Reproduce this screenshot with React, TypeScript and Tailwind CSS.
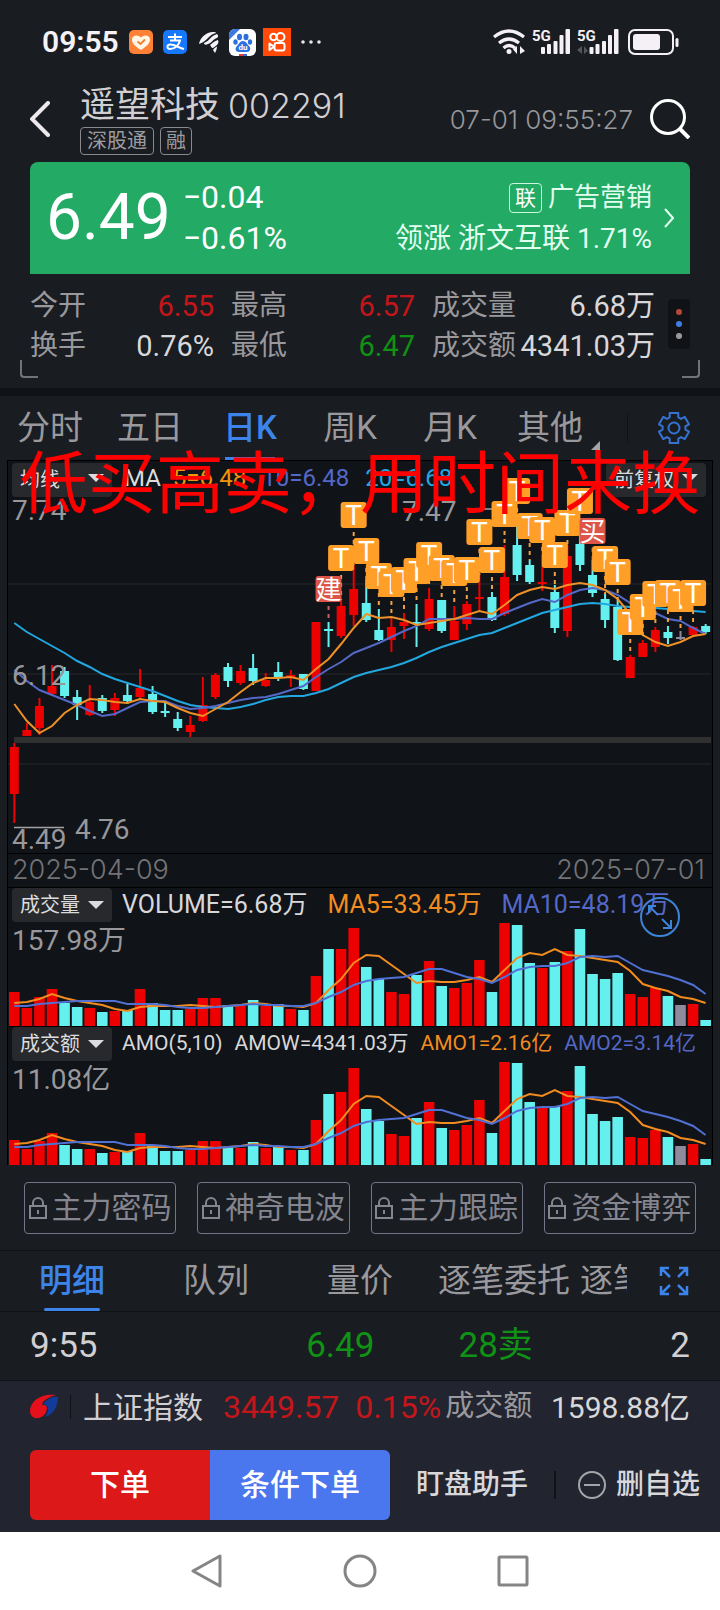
import type { ReactNode } from 'react';

const RED = '#ec0000';
const CYAN = '#65f0f0';
const GRAY = '#8f8a9c';

// x position of the n-th trading day
const dayX = (i: number) => 14.3 + i * 12.57;

// [colour, body top, body bottom, high, low]
const candles: [string, number, number, number, number][] = [
  [RED, 747, 794, 743, 823], [RED, 730, 736, 723, 736], [RED, 706, 728, 698, 735], [RED, 686, 694, 665, 694],
  [CYAN, 671, 696, 667, 698], [CYAN, 697, 705, 690, 720], [RED, 702, 715, 685, 716], [CYAN, 698, 711, 695, 713],
  [RED, 698, 710, 693, 716], [CYAN, 695, 701, 684, 704], [RED, 688, 697, 669, 699], [CYAN, 694, 712, 686, 714],
  [CYAN, 711, 713, 701, 717], [CYAN, 719, 728, 712, 731], [RED, 725, 732, 716, 737], [RED, 705, 721, 677, 722],
  [RED, 675, 697, 673, 699], [CYAN, 667, 681, 663, 687], [RED, 671, 683, 665, 685], [CYAN, 668, 681, 654, 685],
  [RED, 680, 686, 673, 687], [CYAN, 672, 678, 662, 681], [RED, 675, 677, 670, 687], [CYAN, 674, 689, 674, 690],
  [RED, 622, 691, 622, 691], [CYAN, 629, 631, 622, 647], [RED, 606, 636, 600, 638], [RED, 589, 615, 565, 626],
  [CYAN, 603, 620, 580, 622], [CYAN, 630, 640, 609, 641], [RED, 627, 640, 618, 652], [RED, 622, 626, 613, 639],
  [CYAN, 622, 624, 604, 647], [RED, 599, 629, 588, 631], [CYAN, 600, 631, 600, 633], [RED, 621, 640, 606, 640],
  [RED, 604, 624, 601, 630], [RED, 597, 599, 575, 611], [CYAN, 597, 620, 592, 621], [RED, 577, 614, 545, 616],
  [CYAN, 545, 575, 525, 581], [CYAN, 565, 582, 560, 584], [RED, 582, 584, 555, 591], [CYAN, 592, 628, 585, 633],
  [RED, 556, 631, 545, 637], [CYAN, 544, 565, 525, 571], [CYAN, 575, 593, 560, 597], [CYAN, 599, 620, 594, 628],
  [CYAN, 607, 660, 600, 661], [RED, 657, 678, 655, 678], [RED, 643, 657, 640, 657], [RED, 630, 647, 627, 652],
  [CYAN, 632, 638, 626, 644], [GRAY, 637, 639, 631, 640], [RED, 627, 635, 626, 636], [CYAN, 626, 632, 624, 634],
];

const ma5 = [704, 721, 733, 726, 713, 705, 699, 700, 702, 703, 699, 701, 702, 708, 713, 716, 709, 702, 692, 683, 678, 678, 677, 680, 669, 659, 644, 628, 614, 618, 617, 620, 625, 623, 621, 619, 615, 611, 614, 605, 595, 590, 587, 589, 585, 583, 585, 590, 599, 614, 635, 642, 646, 642, 636, 634];
const ma10 = [670, 681, 690, 695, 700, 705, 711, 716, 714, 708, 702, 701, 701, 706, 709, 708, 706, 703, 700, 698, 697, 694, 690, 686, 677, 669, 662, 653, 648, 643, 637, 631, 626, 619, 619, 619, 618, 619, 619, 613, 608, 603, 599, 602, 595, 590, 588, 590, 595, 603, 609, 613, 619, 621, 628, 634];
const ma20 = [623, 632, 639, 646, 653, 661, 667, 674, 679, 683, 687, 691, 696, 701, 705, 707, 708, 709, 707, 704, 700, 697, 696, 696, 693, 689, 683, 677, 673, 670, 667, 663, 658, 652, 647, 643, 639, 635, 633, 628, 623, 618, 613, 610, 607, 604, 603, 604, 606, 607, 608, 608, 609, 610, 611, 612];

// [day, top of the badge, label]
const marks: [number, number, string][] = [
  [25, 576, '建'], [26, 545, 'T'], [27, 502, 'T'], [28, 538, 'T'], [29, 563, 'T'], [30, 571, 'T'], [31, 567, 'T'],
  [32, 558, 'T'], [33, 542, 'T'], [34, 555, 'T'], [35, 560, 'T'], [36, 557, 'T'], [37, 519, 'T'], [38, 547, 'T'],
  [39, 501, 'T'], [40, 478, 'T'], [41, 513, 'T'], [42, 517, 'T'], [43, 542, 'T'], [44, 510, 'T'], [45, 488, 'T'],
  [46, 518, '买'], [47, 546, 'T'], [48, 559, 'T'], [49, 609, 'T'], [50, 594, 'T'], [51, 581, 'T'], [52, 580, 'T'],
  [53, 586, 'T'], [54, 580, 'T'],
];

const volume = [34, 18, 29, 37, 23, 19, 18, 14, 15, 16, 37, 23, 16, 16, 17, 28, 28, 21, 20, 26, 20, 22, 17, 16, 50, 77, 77, 98, 59, 47, 34, 32, 51, 65, 40, 38, 43, 66, 34, 103, 101, 63, 58, 64, 75, 97, 52, 47, 53, 32, 29, 38, 30, 21, 22, 6];
const amount = [25, 16, 24, 32, 20, 16, 16, 12, 13, 14, 32, 19, 14, 14, 15, 24, 24, 18, 17, 23, 17, 19, 15, 15, 45, 71, 73, 97, 56, 44, 31, 29, 47, 63, 37, 35, 40, 65, 32, 103, 102, 63, 57, 59, 74, 99, 51, 44, 48, 28, 27, 35, 28, 19, 21, 6];
const volMa5 = [23, 24, 27, 32, 28, 25, 23, 21, 17, 15, 19, 20, 20, 20, 21, 20, 19, 20, 21, 23, 22, 20, 20, 19, 23, 36, 47, 63, 71, 70, 61, 52, 43, 45, 44, 44, 46, 49, 44, 56, 68, 73, 71, 77, 71, 70, 68, 66, 64, 55, 42, 38, 35, 29, 27, 23];
const volMa10 = [20, 20, 22, 23, 24, 25, 25, 25, 25, 22, 22, 22, 21, 19, 18, 18, 19, 20, 21, 22, 21, 21, 20, 20, 23, 29, 34, 41, 45, 47, 48, 49, 53, 57, 57, 53, 49, 47, 43, 49, 56, 59, 60, 60, 63, 69, 70, 69, 70, 63, 56, 53, 50, 46, 41, 32];
const amoMa5 = volMa5.map((v) => v - 2);
const amoMa10 = volMa10.map((v) => v - 2);

const points = (ys: number[]) => ys.map((y, i) => `${dayX(i).toFixed(1)},${y}`).join(' ');

const stats = [
  { label: '今开', value: '6.55', color: 'text-[#c4161a]' },
  { label: '最高', value: '6.57', color: 'text-[#c4161a]' },
  { label: '成交量', value: '6.68万', color: 'text-[#d8d8da]' },
  { label: '换手', value: '0.76%', color: 'text-[#d8d8da]' },
  { label: '最低', value: '6.47', color: 'text-[#0f9215]' },
  { label: '成交额', value: '4341.03万', color: 'text-[#d8d8da]' },
];

const periods = ['分时', '五日', '日K', '周K', '月K', '其他'];
const features = ['主力密码', '神奇电波', '主力跟踪', '资金博弈'];
const detailTabs = ['明细', '队列', '量价', '逐笔委托'];

function StatusBar() {
  return (
    <div className="flex h-[84px] items-center justify-between pl-[42px] pr-10">
      <div className="flex items-center">
        <span className="text-[30px] font-semibold leading-9 text-[#f4f2f6]">09:55</span>
        <svg className="ml-[10px] h-6 w-6" viewBox="0 0 24 24">
          <rect width="24" height="24" rx="5" fill="#ff8136" />
          <path d="M12 20 C4 15 3 12 3 9.500 C3 5 9 4 12 7.500 C15 4 21 5 21 9.500 C21 12 20 15 12 20Z" fill="#fff6e6" />
          <path d="M8.500 11.500 L11.500 14 L16 9.500" fill="none" stroke="#f08030" strokeWidth="2" />
        </svg>
        <svg className="ml-[10px] h-6 w-6" viewBox="0 0 24 24">
          <rect width="24" height="24" rx="5" fill="#1677ff" />
          <path d="M5 7H19M12 3.500V10M7 10.500H17C16 15 12 19 7 19C3.500 19 3.500 14.500 7.500 14.500C12 14.500 16 18 21 19" fill="none" stroke="#fff" strokeWidth="2" />
        </svg>
        <svg className="ml-3 h-6 w-5" viewBox="0 0 20 24" fill="#f5f3f7">
          <path d="M0 14C1 8 7 2 14 2C16 2 17 2 17 3C10 4 9 11 0 14Z" />
          <path d="M5 13C11 11 11 6 18 4C20 6 19 7 18 8C14 9 13 13 9 14C7 15 5 15 5 13Z" />
          <path d="M11 15C14 13 15 11 19 10C20 12 19 14 18 15C16 16 15 18 13 18Z" />
          <path d="M14 20C15 18 17 17 18 16.500C18 19 17 21 16 23Z" />
        </svg>
        <svg className="ml-[10px] h-[27px] w-[27px]" viewBox="0 0 27 27">
          <rect width="27" height="27" rx="6" fill="#fff" />
          <path d="M0 11V6A6 6 0 0 1 6 0H11Z" fill="#3a79e0" />
          <g fill="#2c6fde">
            <ellipse cx="10.500" cy="8" rx="2.500" ry="3.300" />
            <ellipse cx="17" cy="8" rx="2.500" ry="3.300" />
            <ellipse cx="6.500" cy="13" rx="2.200" ry="2.800" />
            <ellipse cx="21" cy="13" rx="2.200" ry="2.800" />
            <path d="M14 12C17 12 18 15 20 17C22.500 19.500 21 23 18 23H10C6.500 23 5.500 19.500 8 17C10 15 11 12 14 12Z" />
          </g>
          <text x="14" y="21" fontSize="8" fontWeight="700" textAnchor="middle" fill="#fff">du</text>
          <path d="M10 26H14" stroke="#e23b3b" strokeWidth="2" />
          <path d="M14 26H18" stroke="#2c6fde" strokeWidth="2" />
        </svg>
        <svg className="ml-[7px] h-7 w-7" viewBox="0 0 28 28" fill="none" stroke="#fff" strokeWidth="2">
          <rect width="28" height="28" fill="#ff4a0a" stroke="none" />
          <circle cx="10.500" cy="9" r="3.200" />
          <circle cx="17.500" cy="9" r="4" />
          <rect x="11.500" y="15" width="10" height="7.500" rx="2" />
          <path d="M11 18.800L6.500 15.500V22Z" strokeLinejoin="round" />
        </svg>
        <svg className="ml-[10px] h-1 w-5" viewBox="0 0 20 4" fill="#e8e6ea">
          <circle cx="2" cy="2" r="1.800" />
          <circle cx="10" cy="2" r="1.800" />
          <circle cx="18" cy="2" r="1.800" />
        </svg>
      </div>
      <svg className="h-7 w-[188px]" viewBox="492 28 188 28" fill="#f4f0f6">
        <g fill="none" stroke="#f4f0f6" strokeWidth="3.200">
          <path d="M494 37Q509 25 524 37" />
          <path d="M499 43Q509 35 519 43" />
          <path d="M503.500 48Q509 43 515 48" />
        </g>
        <circle cx="509" cy="51.500" r="2.500" />
        <path d="M517 46V54L513 49.500ZM520 54V46L525 51Z" />
        <g fontSize="15" fontWeight="700">
          <text x="532" y="41">5G</text>
          <text x="577" y="41">5G</text>
        </g>
        {[541, 589.500].map((x) => (
          <g key={x}>
            <rect x={x} y="47" width="4" height="7" rx="1" />
            <rect x={x + 6} y="44" width="4" height="10" rx="1" />
            <rect x={x + 12.500} y="41" width="4" height="13" rx="1" />
            <rect x={x + 18.500} y="35" width="4" height="19" rx="1" />
            <rect x={x + 24.500} y="29" width="4.500" height="25" rx="1" />
          </g>
        ))}
        <path d="M582 46V54L577 50ZM584 54V46L588 51Z" fill="#55555c" />
        <rect x="629" y="30" width="44" height="24" rx="6" fill="none" stroke="#f4f0f6" strokeWidth="2" />
        <rect x="633" y="34" width="27" height="16" rx="3" />
        <rect x="675.500" y="38" width="3" height="9" rx="1.500" />
      </svg>
    </div>
  );
}

function Header() {
  return (
    <header className="flex h-[78px] items-center px-[30px] pb-2">
      <button aria-label="返回" className="w-[50px]">
        <svg className="h-9 w-5" viewBox="0 0 20 36" fill="none" stroke="#ece8ec" strokeWidth="4" strokeLinecap="round">
          <path d="M18 2L2 18L18 34" />
        </svg>
      </button>
      <div className="flex-1">
        <h1 className="flex items-center gap-2 whitespace-nowrap text-[35px] font-normal leading-[43px] text-[#d2cfd3]">
          遥望科技 <span className="font-[Inter] text-[34px] font-light">002291</span>
        </h1>
        <div className="flex gap-[6px] text-[20px] leading-[26px] text-[#9c9ca0]">
          <span className="rounded border border-[#8a8a8e] px-[6px]">深股通</span>
          <span className="rounded border border-[#8a8a8e] px-[5px]">融</span>
        </div>
      </div>
      <time className="font-[Inter] text-[26px] font-light text-[#97979c]">07-01 09:55:27</time>
      <button aria-label="搜索" className="ml-[17px]">
        <svg className="h-10 w-10" viewBox="0 0 40 40" fill="none" stroke="#fff" strokeWidth="3">
          <circle cx="18" cy="18" r="16.500" />
          <path d="M29 29L39 39" strokeWidth="4" />
        </svg>
      </button>
    </header>
  );
}

function PriceCard() {
  return (
    <section className="mx-[30px] flex h-[112px] items-center rounded-t-lg bg-[#23aa65] pl-4 pr-4 text-white">
      <strong className="text-[64px] font-normal leading-[80px]">6.49</strong>
      <div className="ml-3 text-[32px] leading-[41px]">
        <div>−0.04</div>
        <div>−0.61%</div>
      </div>
      <a href="#sector" className="ml-auto flex items-center gap-3 text-[26px] leading-[41px] text-[#e2fff0]">
        <span className="text-right">
          <span className="flex items-center justify-end gap-[6px]">
            <span className="rounded border border-[#c8f7de] px-[5px] text-[21px] leading-7 text-white">联</span>
            广告营销
          </span>
          <span className="block text-[28px]">领涨 浙文互联 1.71%</span>
        </span>
        <svg className="h-5 w-[10px]" viewBox="0 0 10 20" fill="none" stroke="#e2fff0" strokeWidth="2">
          <path d="M1 1L9 10L1 19" />
        </svg>
      </a>
    </section>
  );
}

function Stats() {
  return (
    <section className="relative flex h-[114px] items-start pl-[30px] pr-[30px] pt-3">
      <dl className="grid flex-1 grid-cols-[184fr_184fr_223fr] gap-x-[17px] text-[29px] leading-10">
        {stats.map((s) => (
          <div key={s.label} className="flex justify-between whitespace-nowrap">
            <dt className="text-[28px] text-[#99999d]">{s.label}</dt>
            <dd className={s.color}>{s.value}</dd>
          </div>
        ))}
      </dl>
      <button aria-label="更多" className="ml-[13px] mt-[13px] flex h-[50px] w-[22px] flex-col items-center justify-center gap-[6px] rounded bg-[#101216]">
        <span className="h-[6px] w-[6px] rounded-full bg-[#b5483a]" />
        <span className="h-[6px] w-[6px] rounded-full bg-[#3f7fe0]" />
        <span className="h-[6px] w-[6px] rounded-full bg-[#9a9a9e]" />
      </button>
      <span className="absolute bottom-[10px] left-5 h-[18px] w-[18px] rounded-bl border-b-2 border-l-2 border-[#737377]" />
      <span className="absolute bottom-[10px] right-5 h-[18px] w-[18px] rounded-br border-b-2 border-r-2 border-[#737377]" />
    </section>
  );
}

// six-tooth outline around (17,17)
const gearPath = (() => {
  const pts: string[] = [];
  for (let t = 0; t < 6; t++) {
    const mid = -90 + t * 60;
    for (const [a, r] of [[-22, 11.5], [-16, 15.5], [16, 15.5], [22, 11.5]]) {
      const rad = ((mid + a) * Math.PI) / 180;
      pts.push(`${(17 + r * Math.cos(rad)).toFixed(1)},${(17 + r * Math.sin(rad)).toFixed(1)}`);
    }
  }
  return `M${pts.join('L')}Z`;
})();

function PeriodTabs() {
  return (
    <nav className="flex h-16 border-t-8 border-[#101216] box-content">
      <div className="grid flex-1 grid-cols-6 text-[33px] text-[#99999d]">
        {periods.map((p) => (
          <button key={p} className={p === '日K' ? 'relative font-medium text-[#3d84ea]' : 'relative'}>
            {p}
            {p === '日K' && <span className="absolute bottom-0 left-1/4 right-1/4 h-[3px] bg-[#3d84ea]" />}
            {p === '其他' && (
              <svg className="absolute bottom-[10px] right-0 h-[9px] w-[9px]" viewBox="0 0 9 9">
                <path d="M9 0V9H0Z" fill="#a5a5a9" />
              </svg>
            )}
          </button>
        ))}
      </div>
      <div className="flex w-[120px] items-center pl-[27px]">
        <span className="h-[30px] w-px bg-[#101216]" />
        <button aria-label="设置" className="ml-[29px]">
          <svg className="h-[34px] w-[34px]" viewBox="0 0 34 34" fill="none" stroke="#3573d2" strokeWidth="2" strokeLinejoin="round">
            <path d={gearPath} />
            <circle cx="17" cy="17" r="5.500" />
          </svg>
        </button>
      </div>
    </nav>
  );
}

function Dropdown({ label }: { label: string }) {
  return (
    <div className="relative h-[34px] w-[100px] shrink-0">
      <select aria-label={label} className="h-full w-full appearance-none rounded bg-[#27292d] pl-2 text-[20px] text-[#dcdcde]">
        <option>{label}</option>
      </select>
      <svg className="pointer-events-none absolute right-2 top-[13px] h-2 w-4" viewBox="0 0 16 8">
        <path d="M0 0H16L8 8Z" fill="#dcdcde" />
      </svg>
    </div>
  );
}

function PriceChart() {
  return (
    <svg className="block h-auto w-full overflow-visible" viewBox="8 494 704 359">
      {[584, 674, 764].map((y) => (
        <path key={y} d={`M8 ${y}H711`} stroke="#1f2225" strokeWidth="1.500" />
      ))}
      <path d="M14 740H711" stroke="#303030" strokeWidth="6" />
      {candles.map(([color, top, bottom, high, low], i) => (
        <g key={i} fill={color}>
          <rect x={dayX(i) - 1} y={high} width="2" height={low - high} />
          <rect x={dayX(i) - 4.5} y={top} width="9" height={bottom - top} />
        </g>
      ))}
      <g fill="none" strokeWidth="2">
        <polyline points={points(ma20)} stroke="#22a7e0" />
        <polyline points={points(ma10)} stroke="#5468c8" />
        <polyline points={points(ma5)} stroke="#ee9028" />
      </g>
      <path d="M14 827.500H64M480 509H504" stroke="#a2a2a6" strokeWidth="1.500" />
      {marks.map(([day, top, label]) => (
        <path
          key={day}
          d={`M${dayX(day)} ${top + 30}V${Math.max(candles[day][3], top + 30)}`}
          stroke={label === 'T' ? '#f0a045' : '#c8605c'}
          strokeWidth="2"
          strokeDasharray="4 4"
        />
      ))}
      {marks.map(([day, top, label]) => (
        <g key={day}>
          <rect x={dayX(day) - 13} y={top} width="26" height="26" rx="3" fill={label === 'T' ? '#ff9f28' : '#dc5548'} />
          <text x={dayX(day)} y={top + 23} fontSize={label === 'T' ? 28 : 26} textAnchor="middle" fill="#fff">{label}</text>
        </g>
      ))}
      <g fontSize="28" fill="#98989c">
        <text x="12" y="520">7.74</text>
        <text x="12" y="685">6.12</text>
        <text x="12" y="849">4.49</text>
        <text x="75" y="839">4.76</text>
        <text x="402" y="521">7.47</text>
      </g>
    </svg>
  );
}

function BarChart({ bars, short, long, max }: { bars: number[]; short: number[]; long: number[]; max: string }) {
  const flip = (v: number[]) => v.map((n) => 104 - n);
  return (
    <svg className="block h-auto w-full" viewBox="8 0 704 104">
      {bars.map((h, i) => (
        <rect key={i} x={dayX(i) - 5.3} y={104 - h} width="10.600" height={h} fill={candles[i][0]} />
      ))}
      <g fill="none" strokeWidth="2">
        <polyline points={points(flip(short))} stroke="#f28c20" />
        <polyline points={points(flip(long))} stroke="#5070d4" />
      </g>
      <text x="12" y="28" fontSize="28" fill="#98989c">{max}</text>
    </svg>
  );
}

function IndicatorRow({ label, children }: { label: string; children: ReactNode }) {
  return (
    <div className="flex h-[35px] items-center border-t border-black pl-1">
      <Dropdown label={label} />
      {children}
    </div>
  );
}

function Charts() {
  return (
    <section className="relative mx-[7px] border-l border-r border-black bg-[#101317]">
      <div className="flex h-[34px] items-center gap-4 border-t border-black pl-1 pr-[6px] text-[24px]">
        <Dropdown label="均线" />
        <span className="-mx-1 text-[#dcdcde]">MA</span>
        <span className="text-[#f0960a]">5=6.48</span>
        <span className="text-[#5468c8]">10=6.48</span>
        <span className="text-[#22a7e0]">20=6.68</span>
        <div className="ml-auto">
          <Dropdown label="前复权" />
        </div>
      </div>
      <PriceChart />
      <div className="flex h-[34px] items-center justify-between border-t border-black pl-1 pr-[7px] font-[Inter] text-[27px] font-light text-[#737377]">
        <span>2025-04-09</span>
        <span>2025-07-01</span>
      </div>
      <div className="relative">
        <IndicatorRow label="成交量">
          <div className="ml-[10px] flex gap-5 whitespace-nowrap text-[25px]">
            <span className="text-[#d8d8da]">VOLUME=6.68万</span>
            <span className="text-[#f28c20]">MA5=33.45万</span>
            <span className="text-[#5468c8]">MA10=48.19万</span>
          </div>
        </IndicatorRow>
        <button aria-label="全屏" className="absolute right-8 top-[10px]">
          <svg className="h-10 w-10" viewBox="0 0 40 40" fill="none" stroke="#3d84d8" strokeWidth="2">
            <circle cx="20" cy="20" r="19" />
            <path d="M18 18L9 9M9 16V9H16M22 22L31 31M31 23V31H23" />
          </svg>
        </button>
        <BarChart bars={volume} short={volMa5} long={volMa10} max="157.98万" />
      </div>
      <IndicatorRow label="成交额">
        <div className="ml-[10px] flex gap-3 whitespace-nowrap text-[21px]">
          <span className="text-[#d8d8da]">AMO(5,10)</span>
          <span className="text-[#d8d8da]">AMOW=4341.03万</span>
          <span className="text-[#f28c20]">AMO1=2.16亿</span>
          <span className="text-[#5468c8]">AMO2=3.14亿</span>
        </div>
      </IndicatorRow>
      <BarChart bars={amount} short={amoMa5} long={amoMa10} max="11.08亿" />
      <p className="pointer-events-none absolute left-3 top-[-15px] whitespace-nowrap text-[68px] leading-[80px] text-[#ff0000]">
        低买高卖，用时间来换
      </p>
    </section>
  );
}

function Features() {
  return (
    <div className="grid h-[86px] grid-cols-4 items-center gap-[21px] border-b border-[#101216] px-6">
      {features.map((f) => (
        <button key={f} className="flex h-[52px] items-center justify-center gap-[5px] whitespace-nowrap rounded border border-[#74748a] text-[30px] text-[#85858f]">
          <svg className="h-[22px] w-[18px] shrink-0" viewBox="0 0 18 22" fill="none" stroke="#85858f" strokeWidth="2">
            <rect x="1" y="9" width="16" height="12" />
            <path d="M4 9V6A5 5 0 0 1 14 6V9M9 13V17" />
          </svg>
          {f}
        </button>
      ))}
    </div>
  );
}

function Details() {
  return (
    <section>
      <div className="flex h-[61px] items-stretch border-b border-[#101216] text-[33px] text-[#99999d]">
        <div className="flex flex-1 overflow-hidden whitespace-nowrap">
          {detailTabs.map((t, i) => (
            <button key={t} className={i === 0 ? 'relative w-36 shrink-0 font-medium text-[#3d84ea]' : 'w-36 shrink-0'}>
              {t}
              {i === 0 && <span className="absolute bottom-0 left-11 right-11 h-[3px] rounded bg-[#3d84ea]" />}
            </button>
          ))}
          <button className="shrink-0 pl-1">逐笔</button>
        </div>
        <button aria-label="展开" className="w-[93px] pl-8">
          <svg className="h-[30px] w-[30px]" viewBox="0 0 30 30" fill="none" stroke="#3d84ea" strokeWidth="2.500">
            <path d="M2 10V2H10M2 2L11 11M20 2H28V10M28 2L19 11M2 20V28H10M2 28L11 19M20 28H28V20M28 28L19 19" />
          </svg>
        </button>
      </div>
      <table className="w-full table-fixed text-[35px]">
        <tbody>
          <tr className="h-[68px] border-b border-[#101216]">
            <td className="w-1/4 pl-[30px] text-[#d2cfd3]">9:55</td>
            <td className="w-[27%] pr-0 text-right text-[#0f9215]">6.49</td>
            <td className="text-right text-[#0f9215]">28卖</td>
            <td className="w-[26%] pr-[30px] text-right text-[#d2cfd3]">2</td>
          </tr>
        </tbody>
      </table>
    </section>
  );
}

function Footer() {
  return (
    <footer className="bg-[#222530] px-[30px] pb-3">
      <div className="flex h-[69px] items-center whitespace-nowrap pb-4 text-[30px]">
        <svg className="h-7 w-7 shrink-0" viewBox="0 0 28 28">
          <path d="M0 18C0 9 10 0 26 2C19 4 12 8 12 12C20 10 18 24 8 25C3 26 0 22 0 18Z" fill="#e6101c" />
          <path d="M13 11C18 5 24 3 28 4C28 13 24 21 15 24C20 17 19 12 13 11Z" fill="#123b9a" />
        </svg>
        <span className="mx-3 h-6 w-px bg-[#101216]" />
        <span className="text-[#d2cfd3]">上证指数</span>
        <span className="ml-5 text-[32px] text-[#c4161a]">3449.57</span>
        <span className="ml-4 text-[32px] text-[#c4161a]">0.15%</span>
        <span className="ml-1 text-[29px] text-[#99999d]">成交额</span>
        <span className="ml-auto text-[30px] text-[#d8d8da]">1598.88亿</span>
      </div>
      <div className="flex h-[70px] items-center whitespace-nowrap font-medium text-[#d8d8da]">
        <div className="flex h-full w-[360px] overflow-hidden rounded-md text-[30px] text-white">
          <button className="flex-1 bg-[#dd1818]">下单</button>
          <button className="flex-1 bg-[#4a76ee]">条件下单</button>
        </div>
        <button className="ml-[26px] text-[28px]">盯盘助手</button>
        <span className="ml-[26px] h-7 w-[2px] bg-[#101216]" />
        <button className="-mr-3 ml-[22px] flex items-center gap-[10px] text-[28px]">
          <svg className="h-7 w-7" viewBox="0 0 28 28" fill="none" stroke="#a5a5a9" strokeWidth="2">
            <circle cx="14" cy="14" r="13" />
            <path d="M6 14H22" />
          </svg>
          删自选
        </button>
      </div>
    </footer>
  );
}

function SystemNav() {
  return (
    <nav className="flex h-[78px] items-center justify-center gap-[120px] bg-white">
      <button aria-label="后退">
        <svg className="h-[34px] w-8" viewBox="0 0 32 34" fill="none" stroke="#858585" strokeWidth="3" strokeLinejoin="round">
          <path d="M2 17L29 2V32Z" />
        </svg>
      </button>
      <button aria-label="主页">
        <svg className="h-[34px] w-[34px]" viewBox="0 0 34 34" fill="none" stroke="#858585" strokeWidth="3">
          <circle cx="17" cy="17" r="15" />
        </svg>
      </button>
      <button aria-label="最近任务">
        <svg className="h-8 w-8" viewBox="0 0 32 32" fill="none" stroke="#858585" strokeWidth="3">
          <rect x="2" y="2" width="28" height="28" rx="1" />
        </svg>
      </button>
    </nav>
  );
}

export default function App() {
  return (
    <div className="overflow-x-hidden bg-[#191c21] font-['Roboto','Noto_Sans_CJK_SC',sans-serif]">
      <StatusBar />
      <Header />
      <PriceCard />
      <Stats />
      <PeriodTabs />
      <Charts />
      <Features />
      <Details />
      <Footer />
      <SystemNav />
    </div>
  );
}
